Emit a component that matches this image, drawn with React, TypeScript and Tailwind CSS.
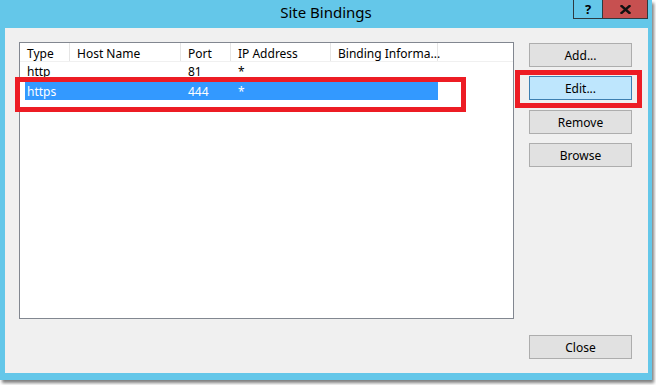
import React from "react";

const font = { fontFamily: '"Noto Sans", "Segoe UI", Arial, sans-serif' };

const cols = [
  { label: "Type", w: "w-[50px]" },
  { label: "Host Name", w: "w-[111px]" },
  { label: "Port", w: "w-[50px]" },
  { label: "IP Address", w: "w-[100px]" },
  { label: "Binding Informa...", w: "w-[107px]" },
];

type Binding = { type: string; host: string; port: string; ip: string; info: string };

const bindings: Binding[] = [
  { type: "http", host: "", port: "81", ip: "*", info: "" },
  { type: "https", host: "", port: "444", ip: "*", info: "" },
];

function DlgButton({ label, active }: { label: string; active?: boolean }) {
  return (
    <div
      className={`h-[24px] w-[103px] border flex items-center justify-center pt-[2px] text-[12px] text-black ${
        active ? "bg-[#bee6fd] border-[#3c7fb1]" : "bg-[#e1e1e1] border-[#adadad]"
      }`}
    >
      {label}
    </div>
  );
}

function Row({ b, selected }: { b: Binding; selected?: boolean }) {
  return (
    <div
      className={`flex ml-[5px] w-[413px] text-[12px] leading-[18px] pt-[1px] ${
        selected ? "h-[18px] mt-[1px] bg-[#3399ff] text-white" : "h-[19px] text-black"
      }`}
    >
      <div className="w-[45px] pl-[2px]">{b.type}</div>
      <div className="w-[111px] pl-[7px]">{b.host}</div>
      <div className="w-[50px] pl-[7px]">{b.port}</div>
      <div className="w-[100px] pl-[7px]">{b.ip}</div>
      <div className="w-[107px] pl-[7px]">{b.info}</div>
    </div>
  );
}

export default function App() {
  return (
    <div className="w-[656px] h-[385px] bg-white overflow-hidden" style={font}>
      <div className="w-[652px] h-[380px] bg-[#64c7e9] shadow-[2px_3px_3px_rgba(0,0,0,0.5)] flex flex-col">
        {/* Title bar */}
        <div className="relative h-[28px] flex items-center justify-center pb-[3px]">
          <span className="text-[15px] text-black">Site Bindings</span>
          <div className="absolute top-0 right-[4px] flex h-[19px]">
            <div className="w-[29px] h-full border-l border-b border-[#2e3a40] flex items-center justify-center text-[13px] font-bold text-black leading-none">
              ?
            </div>
            <div className="w-[46px] h-full bg-[#c75050] border-l border-r border-b border-[#2e3a40] flex items-center justify-center">
              <svg width="11" height="9" viewBox="0 0 11 9">
                <path d="M1.5 1 L9.5 8 M9.5 1 L1.5 8" stroke="#111" strokeWidth="2.4" strokeLinecap="square" />
              </svg>
            </div>
          </div>
        </div>

        {/* Client area */}
        <div className="ml-[5px] mr-[4px] h-[345px] bg-[#f0f0f0] flex pl-[14px] pt-[14px] pb-[14px]">
          {/* List view */}
          <div className="relative w-[495px] h-[277px] border border-[#828790] bg-white">
            <div className="flex h-[19px] border-b border-[#f0f0f0] text-[12px] text-black leading-[18px] pt-[2px]">
              {cols.map((c) => (
                <div key={c.label} className={`${c.w} pl-[7px] border-r border-[#e5e5e5] whitespace-nowrap -mt-[2px] pt-[2px]`}>
                  {c.label}
                </div>
              ))}
            </div>
            <Row b={bindings[0]} />
            <Row b={bindings[1]} selected />
            {/* annotation */}
            <div className="absolute left-[-5px] top-[34px] w-[451px] h-[35px] border-[5px] border-[#ed1c24]" />
          </div>

          {/* Buttons */}
          <div className="ml-[15px] w-[103px] flex flex-col pt-[1px]">
            <DlgButton label="Add..." />
            <div className="relative mt-[9px]">
              <DlgButton label="Edit..." active />
              <div className="absolute left-[-14px] top-[-6px] w-[127px] h-[38px] border-[5px] border-[#ed1c24]" />
            </div>
            <div className="mt-[10px]">
              <DlgButton label="Remove" />
            </div>
            <div className="mt-[9px]">
              <DlgButton label="Browse" />
            </div>
            <div className="mt-auto">
              <DlgButton label="Close" />
            </div>
          </div>
        </div>
      </div>
    </div>
  );
}
